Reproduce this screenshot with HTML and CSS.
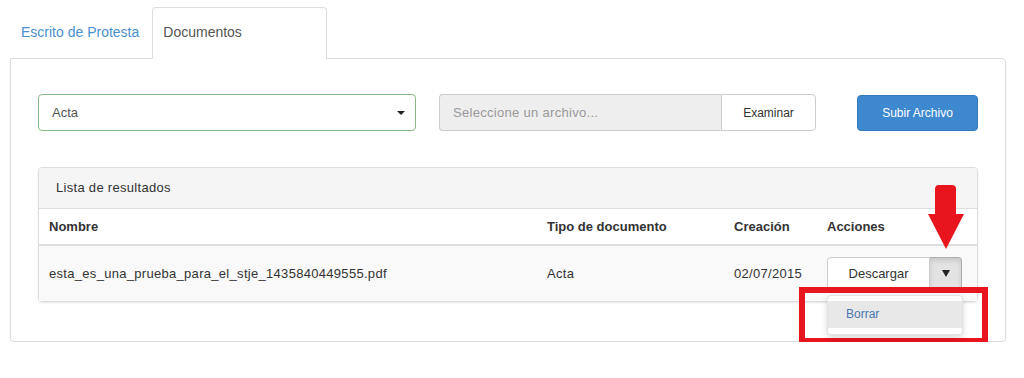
FILE: index.html
```html
<!DOCTYPE html>
<html lang="es">
<head>
  <meta charset="UTF-8" />
  <title>Documentos</title>
  <link rel="stylesheet" href="styles.css">
</head>
<body>
  <ul class="tabs">
    <li class="tab"><a href="#">Escrito de Protesta</a></li>
    <li class="tab activo"><a href="#">Documentos</a></li>
  </ul>

  <div class="panel">
    <div class="fila-carga">
      <div class="selector">
        <span>Acta</span>
        <span class="flecha"></span>
      </div>

      <div class="archivo">
        <span class="archivo-texto">Seleccione un archivo...</span>
        <button class="btn-examinar">Examinar</button>
      </div>

      <button class="btn-subir">Subir Archivo</button>
    </div>

    <div class="resultados">
      <div class="resultados-titulo">Lista de resultados</div>
      <table>
        <colgroup>
          <col style="width: 498px">
          <col style="width: 187px">
          <col style="width: 93px">
          <col>
        </colgroup>
        <thead>
          <tr>
            <th>Nombre</th>
            <th>Tipo de documento</th>
            <th>Creación</th>
            <th>Acciones</th>
          </tr>
        </thead>
        <tbody>
          <tr>
            <td>esta_es_una_prueba_para_el_stje_1435840449555.pdf</td>
            <td>Acta</td>
            <td>02/07/2015</td>
            <td>
              <div class="grupo-btn">
                <button class="btn-descargar">Descargar</button>
                <button class="btn-toggle"><span class="flecha"></span></button>

                <svg class="aviso-flecha" width="36" height="64" viewBox="0 0 36 64">
                  <path d="M7 4 Q7 0 11 0 L24 0 Q28 0 28 4 L28 29 L36 29 L18 64 L0 29 L7 29 Z" fill="#e8141e"/>
                </svg>
                <div class="aviso-marco"></div>

                <ul class="menu">
                  <li class="menu-item"><a href="#">Borrar</a></li>
                </ul>
              </div>
            </td>
          </tr>
        </tbody>
      </table>
    </div>
  </div>
</body>
</html>
```

FILE: styles.css
```css
body {
  font-family: "Liberation Sans", Arial, sans-serif;
  font-size: 13px;
  letter-spacing: 0.3px;
  color: #333;
  background: white;
  margin: 0;
  padding: 7px 18px 0 10px;
}

a {
  text-decoration: none;
}

.tabs {
  display: flex;
  list-style: none;
  margin: 0 0 -1px 0;
  padding: 0;
}

.tab {
  margin-right: 2px;
  font-size: 14px;
  letter-spacing: 0;
}

.tab a {
  display: block;
  padding: 15px 10px 18px;
  line-height: 18px;
  border: 1px solid transparent;
  border-bottom: none;
  color: #4a90d0;
}

.tab.activo a {
  position: relative;
  z-index: 1;
  width: 153px;
  background: white;
  color: #555;
  border-color: #ddd;
  border-radius: 4px 4px 0 0;
}

.panel {
  border: 1px solid #ddd;
  border-radius: 0 4px 4px 4px;
  padding: 35px 27px 39px;
  box-shadow: 0 1px 2px rgba(0,0,0,0.08);
}

.fila-carga {
  display: flex;
  align-items: center;
  height: 37px;
}

.selector {
  width: 378px;
  height: 37px;
  box-sizing: border-box;
  border: 1px solid #86bb86;
  border-radius: 4px;
  padding: 0 10px 0 13px;
  display: flex;
  align-items: center;
  justify-content: space-between;
  color: #555;
  letter-spacing: 0;
}

.flecha {
  width: 0;
  height: 0;
  border-left: 4px solid transparent;
  border-right: 4px solid transparent;
  border-top: 4px solid #222;
}

.archivo {
  width: 377px;
  height: 37px;
  margin-left: 23px;
  display: flex;
}

.archivo-texto {
  flex: 1;
  display: flex;
  align-items: center;
  padding-left: 13px;
  background: #eee;
  color: #999;
  border: 1px solid #ccc;
  border-right: none;
  border-radius: 4px 0 0 4px;
}

.btn-examinar {
  width: 95px;
  background: white;
  border: 1px solid #ccc;
  border-radius: 0 4px 4px 0;
  font-family: inherit;
  font-size: 12px;
  color: #333;
}

.btn-subir {
  margin-left: auto;
  width: 121px;
  height: 36px;
  background: #3d88cf;
  border: 1px solid #3579ba;
  border-radius: 4px;
  color: white;
  font-family: inherit;
  font-size: 12px;
}

.resultados {
  margin-top: 36px;
  border: 1px solid #ddd;
  border-radius: 4px;
  box-shadow: 0 1px 2px rgba(0,0,0,0.1);
}

.resultados-titulo {
  background: #f5f5f5;
  border-bottom: 1px solid #ddd;
  border-radius: 4px 4px 0 0;
  height: 40px;
  line-height: 40px;
  padding-left: 17px;
}

table {
  width: 100%;
  border-collapse: collapse;
  table-layout: fixed;
}

th {
  text-align: left;
  font-weight: bold;
  letter-spacing: 0;
  height: 35px;
  padding: 0 10px;
  border-bottom: 2px solid #ddd;
}

td {
  background: #f9f9f9;
  height: 55px;
  padding: 0 10px;
}

.grupo-btn {
  position: relative;
  display: flex;
  width: 135px;
  height: 34px;
}

.btn-descargar {
  width: 103px;
  background: white;
  border: 1px solid #ccc;
  border-radius: 4px 0 0 4px;
  font-family: inherit;
  font-size: 13px;
  color: #333;
}

.btn-toggle {
  width: 32px;
  background: #e3e3e3;
  border: 1px solid #adadad;
  border-left: none;
  border-radius: 0 4px 4px 0;
  box-shadow: inset 0 3px 5px rgba(0,0,0,0.12);
  display: flex;
  align-items: center;
  justify-content: center;
}

.btn-toggle .flecha {
  border-top-width: 7px;
}

.aviso-flecha {
  position: absolute;
  left: 101px;
  top: -72px;
}

.aviso-marco {
  position: absolute;
  left: -28px;
  top: 30px;
  width: 177px;
  height: 45px;
  border: 6px solid #e8141e;
}

.menu {
  position: absolute;
  left: 0;
  top: 38px;
  width: 134px;
  margin: 0;
  padding: 5px 0 6px;
  list-style: none;
  background: white;
  border: 1px solid #e2e2e2;
  border-radius: 4px;
  box-shadow: 0 3px 6px rgba(0,0,0,0.15);
}

.menu-item a {
  display: block;
  padding: 0 18px;
  line-height: 27px;
  background: #e8e8e8;
  color: #4a78ad;
  font-size: 12px;
  letter-spacing: 0;
}
```
